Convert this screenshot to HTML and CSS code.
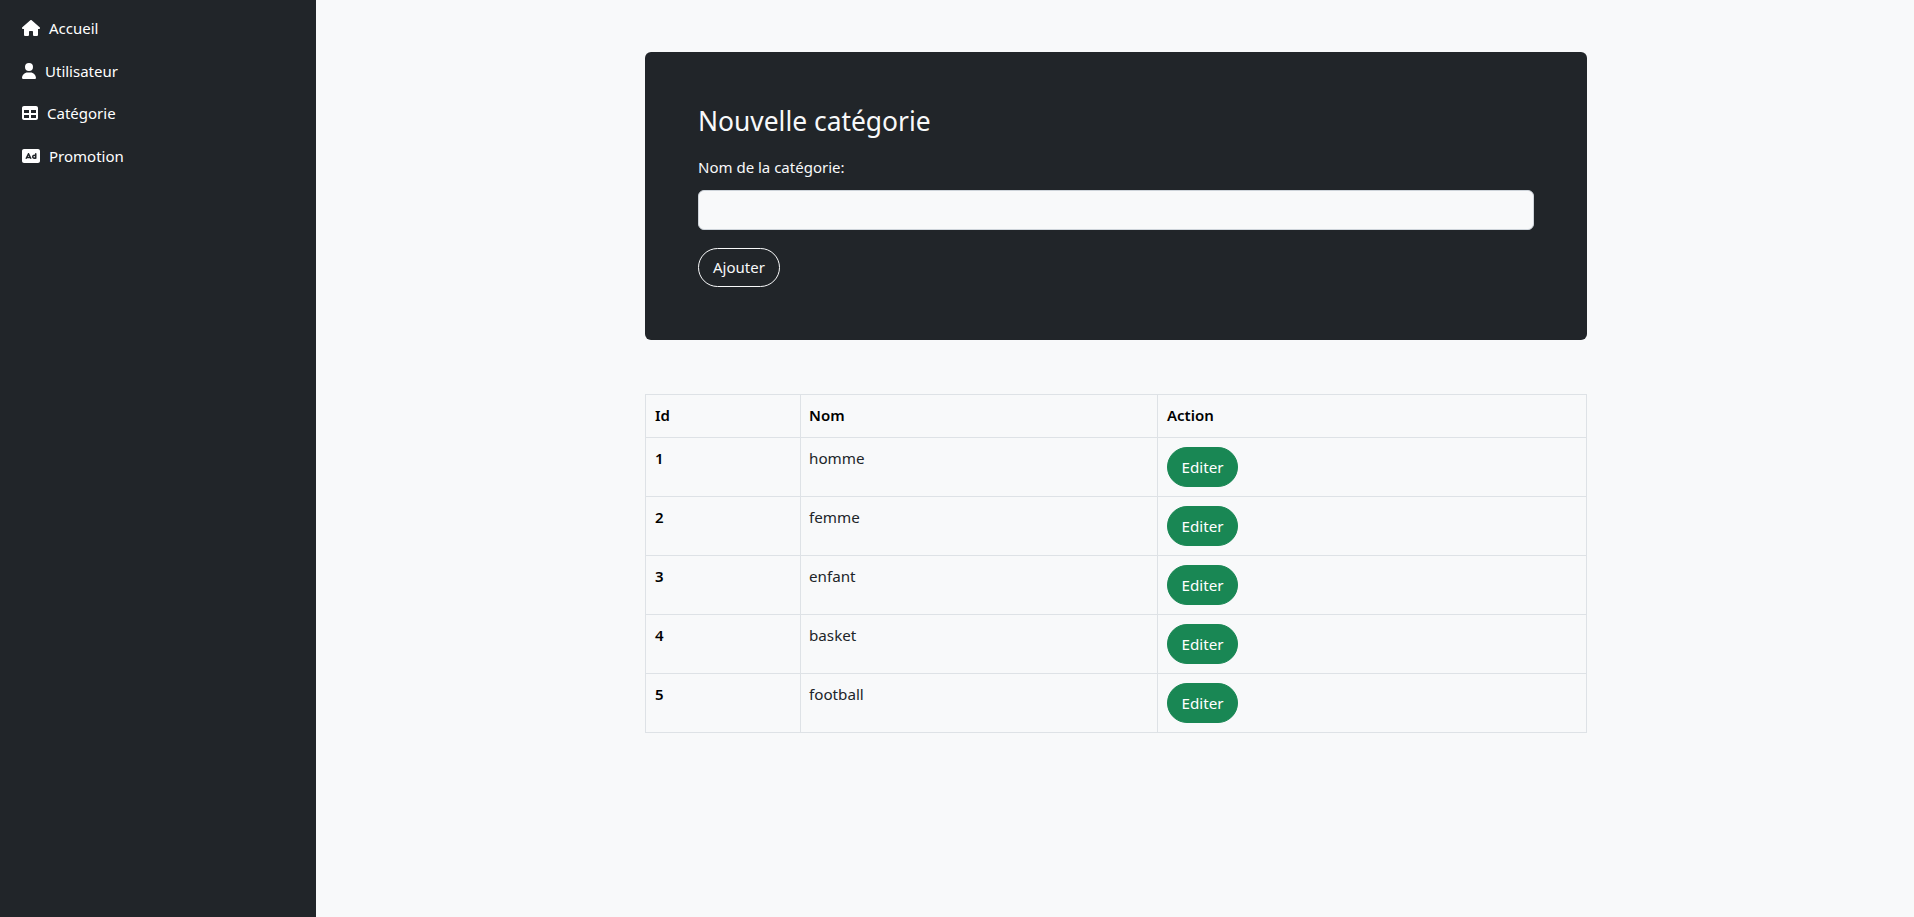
FILE: index.html
```html
<!DOCTYPE html>
<html lang="fr">
<head>
<meta charset="utf-8">
<title>Catégorie</title>
<link rel="stylesheet" href="styles.css">
</head>
<body>
<div class="layout">
  <nav class="sidebar">
    <a class="nav-item"><svg class="icon icon-wide" viewBox="0 0 576 512" fill="currentColor"><path d="M575.800 255.500c0 18-15 32.100-32 32.100h-32l.7 160.200c0 2.700-.2 5.400-.5 8.100V472c0 22.100-17.900 40-40 40H456c-1.100 0-2.200 0-3.300-.1c-1.400 .1-2.800 .1-4.200 .1H416 392c-22.100 0-40-17.900-40-40V448 384c0-17.700-14.300-32-32-32H256c-17.700 0-32 14.300-32 32v64 24c0 22.100-17.900 40-40 40H160 128.100c-1.500 0-3-.1-4.500-.2c-1.200 .1-2.400 .2-3.600 .2H104c-22.100 0-40-17.900-40-40V360c0-.9 0-1.900 .1-2.800V287.600H32c-18 0-32-14-32-32.100c0-9 3-17 10-24L266.400 8c7-7 15-8 22-8s15 2 21 7L564.800 231.500c8 7 12 15 11 24z"/></svg>Accueil</a>
    <a class="nav-item"><svg class="icon icon-user" viewBox="0 0 448 512" fill="currentColor"><path d="M224 256A128 128 0 1 0 224 0a128 128 0 1 0 0 256zm-45.700 48C79.800 304 0 383.800 0 482.300C0 498.700 13.300 512 29.700 512H418.300c16.400 0 29.700-13.300 29.700-29.700C448 383.800 368.200 304 269.700 304H178.300z"/></svg>Utilisateur</a>
    <a class="nav-item"><svg class="icon icon-square" viewBox="0 0 512 512" fill="currentColor"><path d="M64 256V160H224v96H64zm0 64H224v96H64V320zm224 96V320H448v96H288zM448 256H288V160H448v96zM64 32C28.700 32 0 60.700 0 96V416c0 35.300 28.700 64 64 64H448c35.300 0 64-28.700 64-64V96c0-35.300-28.700-64-64-64H64z"/></svg>Catégorie</a>
    <a class="nav-item"><svg class="icon icon-wide" viewBox="0 0 576 512" fill="currentColor"><path d="M64 32C28.700 32 0 60.700 0 96V416c0 35.300 28.700 64 64 64H512c35.300 0 64-28.700 64-64V96c0-35.300-28.700-64-64-64H64zM229.500 173.300l72 144c5.900 11.900 1.100 26.300-10.700 32.200s-26.300 1.100-32.200-10.700L253.200 328H162.800l-5.400 10.700c-5.900 11.900-20.300 16.700-32.200 10.700s-16.700-20.300-10.700-32.200l72-144c4.100-8.100 12.400-13.300 21.500-13.300s17.400 5.100 21.500 13.300zM208 237.700L186.800 280h42.300L208 237.700zM392 256a24 24 0 1 0 0 48 24 24 0 1 0 0-48zm24-43.900V184c0-13.300 10.700-24 24-24s24 10.700 24 24v80 64c0 13.300-10.700 24-24 24c-6.600 0-12.600-2.700-17-7c-9.400 4.500-20 7-31 7c-39.800 0-72-32.200-72-72s32.200-72 72-72c8.400 0 16.500 1.400 24 4.100z"/></svg>Promotion</a>
  </nav>
  <main class="content">
    <section class="card">
      <h1 class="card-title">Nouvelle catégorie</h1>
      <label class="field-label" for="nom">Nom de la catégorie:</label>
      <input class="field-input" id="nom" type="text">
      <button class="btn btn-outline" type="button">Ajouter</button>
    </section>
    <table class="data-table">
      <thead>
        <tr><th class="col-id">Id</th><th class="col-nom">Nom</th><th>Action</th></tr>
      </thead>
      <tbody>
        <tr><th>1</th><td>homme</td><td class="cell-action"><button class="btn btn-green" type="button">Editer</button></td></tr>
        <tr><th>2</th><td>femme</td><td class="cell-action"><button class="btn btn-green" type="button">Editer</button></td></tr>
        <tr><th>3</th><td>enfant</td><td class="cell-action"><button class="btn btn-green" type="button">Editer</button></td></tr>
        <tr><th>4</th><td>basket</td><td class="cell-action"><button class="btn btn-green" type="button">Editer</button></td></tr>
        <tr><th>5</th><td>football</td><td class="cell-action"><button class="btn btn-green" type="button">Editer</button></td></tr>
      </tbody>
    </table>
  </main>
</div>
</body>
</html>
```
FILE: styles.css
```css
* { box-sizing: border-box; }
html, body { margin: 0; }
body {
  background: #f8f9fa;
  color: #212529;
  font-family: "Noto Sans", "Open Sans", sans-serif;
  font-size: 15px;
}
.layout { display: flex; height: 917px; overflow: hidden; }
.sidebar {
  width: 316px;
  flex: none;
  background: #212529;
  display: flex;
  flex-direction: column;
  padding: 7px 0 0 22px;
}
.nav-item {
  display: flex;
  align-items: center;
  gap: 9px;
  height: 42.6px;
  color: #fff;
}
.icon { height: 16px; flex: none; }
.icon-wide { width: 18px; }
.icon-user { width: 14px; }
.icon-square { width: 16px; }
.content {
  flex: 1;
  padding: 52px 0 0 329px;
}
.card {
  width: 942px;
  height: 288px;
  background: #212529;
  border-radius: 6px;
  padding: 53px;
  color: #f8f9fa;
  display: flex;
  flex-direction: column;
  align-items: flex-start;
}
.card-title {
  margin: 0 0 18px;
  font-size: 26.4px;
  font-weight: 400;
  line-height: 32px;
}
.field-label { line-height: 24px; margin-bottom: 11px; }
.field-input {
  width: 100%;
  height: 40px;
  background: #f8f9fa;
  border: 1px solid #ced4da;
  border-radius: 6px;
  margin-bottom: 18px;
}
.btn {
  height: 40px;
  border-radius: 20px;
  padding: 0 14px;
  font: inherit;
  line-height: 24px;
}
.btn-outline {
  background: transparent;
  border: 1px solid #f8f9fa;
  color: #f8f9fa;
}
.btn-green {
  background: #198754;
  border: 1px solid #198754;
  color: #fff;
  padding: 0 13.5px;
  margin-top: 1px;
}
.data-table {
  width: 942px;
  margin-top: 54px;
  border-collapse: collapse;
  table-layout: fixed;
  color: #212529;
}
.data-table th, .data-table td {
  border: 1px solid #dee2e6;
  padding: 8px;
  text-align: left;
  vertical-align: top;
  line-height: 24px;
}
.data-table td { font-size: 15.2px; }
.data-table th { font-weight: 600; color: #000; padding-left: 9px; }
.data-table th.col-nom { padding-left: 8px; }
.data-table td.cell-action { padding-left: 9px; }
.data-table thead th { padding-top: 7.5px; padding-bottom: 7.5px; }
.data-table thead tr { height: 43px; }
.data-table tbody tr { height: 59px; }
.col-id { width: 155px; }
.col-nom { width: 357px; }
```
